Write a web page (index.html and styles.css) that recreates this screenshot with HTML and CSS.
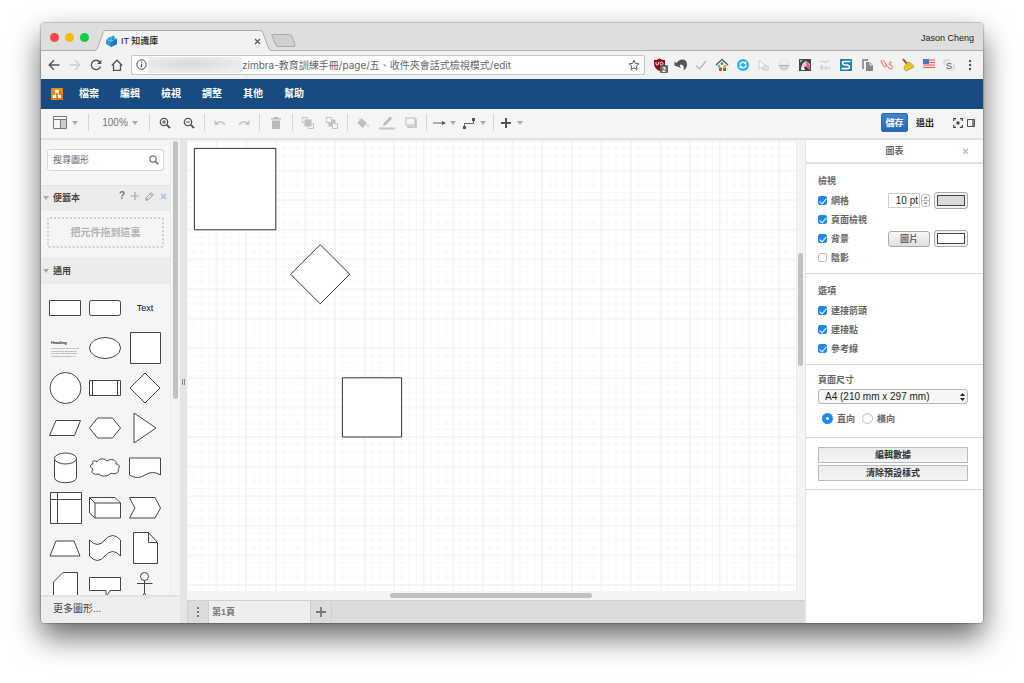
FILE: index.html
```html
<!DOCTYPE html>
<html lang="zh-Hant">
<head>
<meta charset="utf-8">
<title>IT 知識庫</title>
<link rel="stylesheet" href="styles.css">
</head>
<body>
<div class="window">
  <header class="tabstrip">
    <div class="lights"><i class="light red"></i><i class="light yellow"></i><i class="light green"></i></div>
    <div class="tab">
      <svg class="tab-edge" width="10" height="21" viewBox="0 0 10 21"><path d="M0 21C2 20 3 17 4 14L8 3Q9 .5 10 .5V21Z" fill="#f2f2f2"/><path d="M0 20.5C2 20 3 17 4 14L8 3Q9 .5 10 .5" fill="none" stroke="#aaa"/></svg>
      <div class="tab-body">
        <svg width="13" height="12" viewBox="0 0 13 12"><path d="M1 5 7 2l5 2v5l-6 3-5-3z" fill="#2d96d3"/><path d="M1 5 7 2l5 2-6 3z" fill="#5fb8e6"/><path d="M6 7l6-3v5l-6 3z" fill="#1878b8"/><ellipse cx="4.500" cy="3.500" rx="1.700" ry="1.200" fill="#2f9bd8"/><ellipse cx="8" cy="2" rx="1.700" ry="1.200" fill="#2f9bd8"/><ellipse cx="8" cy="4.300" rx="1.500" ry="1" fill="#2488c7"/></svg>
        <span class="tab-title">IT 知識庫</span>
        <button class="plain" aria-label="關閉分頁"><svg width="7" height="7" viewBox="0 0 7 7"><path d="M1 1l5 5M6 1 1 6" stroke="#555" stroke-width="1.200"/></svg></button>
      </div>
      <svg class="tab-edge" width="10" height="21" viewBox="0 0 10 21"><path d="M10 21C8 20 7 17 6 14L2 3Q1 .5 0 .5V21Z" fill="#f2f2f2"/><path d="M10 20.5C8 20 7 17 6 14L2 3Q1 .5 0 .5" fill="none" stroke="#aaa"/></svg>
    </div>
    <button class="plain newtab" aria-label="新分頁"><svg width="25" height="13" viewBox="0 0 25 13"><path d="M2 .5H18.500Q20 .5 21 2l3 8.500q.5 2-1 2H7q-1.500 0-2-1.500L1 2Q.5.5 2 .5Z" fill="#d0d0d0" stroke="#aaa"/></svg></button>
    <span class="profile">Jason Cheng</span>
  </header>

  <nav class="browserbar">
    <div class="nav-buttons">
      <button class="plain" aria-label="上一頁"><svg width="12" height="12" viewBox="0 0 12 12"><path d="M11.500 6H1.500M6 1.200 1.200 6 6 10.800" fill="none" stroke="#555" stroke-width="1.400"/></svg></button>
      <button class="plain" aria-label="下一頁"><svg width="12" height="12" viewBox="0 0 12 12"><path d="M.5 6h10M6 1.200 10.800 6 6 10.800" fill="none" stroke="#d0d0d0" stroke-width="1.400"/></svg></button>
      <button class="plain" aria-label="重新整理"><svg width="12" height="12" viewBox="0 0 12 12"><path d="M9.800 3A4.700 4.700 0 1 0 10.500 7.500" fill="none" stroke="#555" stroke-width="1.400"/><path d="M11.300.8V5H7z" fill="#555"/></svg></button>
      <button class="plain" aria-label="首頁"><svg width="12" height="12" viewBox="0 0 12 12"><path d="M.8 6.500 6 1.200l5.200 5.300M2.500 5.500v5.800h7V5.500" fill="none" stroke="#555" stroke-width="1.300"/></svg></button>
    </div>
    <div class="address">
      <svg width="11" height="11" viewBox="0 0 11 11"><circle cx="5.500" cy="5.500" r="4.700" fill="none" stroke="#444"/><path d="M5.500 4.700v3.500M5.500 2.500v1.200" stroke="#444" stroke-width="1.200"/></svg>
      <span class="redacted"></span>
      <input class="url" aria-label="網址" value="zimbra-教育訓練手冊/page/五、收件夾會話式檢視模式/edit">
      <svg width="12" height="12" viewBox="0 0 12 12"><path d="m6 1.200 1.400 3.300 3.600.3-2.700 2.400.8 3.500L6 8.800l-3.100 1.900.8-3.500L1 4.800l3.600-.3z" fill="none" stroke="#555"/></svg>
    </div>
    <div class="extensions">
      <svg viewBox="0 0 16 16"><path d="M2 3Q5 3 7.500 1.500 10 3 13 3v4q0 4-5.500 7Q2 11 2 7z" fill="#8c0a12"/><path d="M4 5v2q0 1 1.200 1t1.200-1V5M8 6.500a1.500 1.500 0 1 0 3 0 1.500 1.500 0 1 0-3 0" fill="none" stroke="#fff" stroke-width=".9"/><rect x="8" y="8" width="8" height="8" rx="1" fill="#666"/><text x="12" y="15" font-size="7" text-anchor="middle" class="badge">2</text></svg>
      <svg viewBox="0 0 16 16"><path d="M1.500 8.500V4.500L3.500 6Q6 2 10 2.500q4 .5 4 5 0 3.500-3.500 6 1-4-1-5.500-1.500-1-3 .5L8 11z" fill="#555"/></svg>
      <svg viewBox="0 0 16 16"><path d="m3 8.500 3.500 3.500L13 4" fill="none" stroke="#bbb" stroke-width="1.500"/></svg>
      <svg viewBox="0 0 16 16"><path d="M3 8v6h10V8L8 4z" fill="#fff"/><path d="M2 8 8 2.500 14 8" fill="none" stroke="#666" stroke-width="1.600"/><circle cx="8" cy="6.500" r="1.500" fill="#3aa84a"/><circle cx="5" cy="9" r="1.600" fill="#36c5e0"/><circle cx="11" cy="9" r="1.600" fill="#f3a712"/><rect x="5" y="10.500" width="3" height="3.500" fill="#e8402f"/><rect x="9" y="10.500" width="3" height="3.500" fill="#2f9c48"/></svg>
      <svg viewBox="0 0 16 16"><circle cx="8" cy="8" r="6" fill="#2bb5ee"/><path d="M5 8.500A3 3 0 0 1 10 6M11 7.500A3 3 0 0 1 6 10" fill="none" stroke="#fff" stroke-width="1.300"/><path d="M11.300 4v3H8.500zM4.700 12V9h2.800z" fill="#fff"/></svg>
      <svg viewBox="0 0 16 16"><path d="M4 3v9l2.500-2L8 13l1-4H11z" fill="#fafafa" stroke="#ccc"/><circle cx="11" cy="11" r="2.500" fill="#eee" stroke="#ccc"/><path d="m9.500 12.500 3-3" stroke="#ccc"/></svg>
      <svg viewBox="0 0 16 16"><circle cx="8" cy="8" r="5.500" fill="#d4d4d4"/><path d="M3 8a5 5 0 0 1 10 0z" fill="#efefef"/><path d="M3 8.500h10" stroke="#aaa"/></svg>
      <svg viewBox="0 0 16 16"><rect x="2" y="2" width="12" height="12" fill="#444"/><path d="M4 13C4 8 6 5 9 4l4 3v6l-4-4z" fill="#f3bccb"/><path d="M6 9 4 13h4z" fill="#fff"/><path d="M9 5q4 1 4 8l-3-4z" fill="#df4d82"/><path d="M3 6V3h3z" fill="#68c4a5"/></svg>
      <svg viewBox="0 0 16 16"><path d="M3 4h2M6 6V4l1 1 1-1v2M10 6V4h2M3 9h3M4 12h2v-2H4zM8 13v-3h2v2H8M12 9v3h1" fill="none" stroke="#ccc"/></svg>
      <svg viewBox="0 0 16 16"><rect x="2" y="2" width="12" height="12" fill="#267ead"/><path d="M12.500 4.500H6.500q-2 0-2 1.500T7 8h2.500q2 .3 2 2t-2 1.600H3.500" fill="none" stroke="#fff" stroke-width="1.600"/></svg>
      <svg viewBox="0 0 16 16"><path d="M3 2h6v2H5v8H3z" fill="#999"/><path d="M7 5h4l3 3v6H7z" fill="#888"/><path d="M11 5v3h3" fill="none" stroke="#eee"/></svg>
      <svg viewBox="0 0 16 16"><path d="M2 3c1 4 2 6 4 7 2 0 1-3 0-4l4 5c2 2 4 0 3-2l-3-2 1-2 2 1M4 3l3 4" fill="none" stroke="#f08479" stroke-width="1.100"/></svg>
      <svg viewBox="0 0 16 16"><path d="m3 2 4 5" stroke="#a8481b" stroke-width="2"/><path d="M8 5 4 10q0 3 2 4l8-4q-2-4-6-5z" fill="#f1cf2d" stroke="#b3901b" stroke-width=".8"/><path d="m6 8 4 4M8 7l4 3" stroke="#c49d1a" stroke-width=".8"/></svg>
      <svg viewBox="0 0 16 16"><rect x="2" y="2" width="12" height="9" fill="#f7dede"/><path d="M2 3h12M2 5.500h12M2 8h12M2 10.500h12" stroke="#e86161" stroke-width="1.200"/><rect x="2" y="2" width="6" height="5" fill="#4c78bd"/></svg>
      <svg viewBox="0 0 16 16"><circle cx="6" cy="6" r="4" fill="#ddd"/><circle cx="10" cy="10" r="4" fill="#ddd"/><rect x="4" y="4" width="8" height="9" rx="3" fill="#eee"/><text x="8" y="12" font-size="9" text-anchor="middle" class="letter">S</text></svg>
      <svg viewBox="0 0 16 16"><g fill="#555"><circle cx="8" cy="4" r="1.200"/><circle cx="8" cy="8" r="1.200"/><circle cx="8" cy="12" r="1.200"/></g></svg>
    </div>
  </nav>

  <nav class="menubar">
    <svg width="12" height="12" viewBox="0 0 12 12"><rect width="12" height="12" rx="1" fill="#f08705"/><path d="M7 12 2 7l5-5 5 5v5z" fill="#df6c0c"/><path d="M6 3 3.500 8M6 3l2.500 5" stroke="#fff"/><g fill="#fff"><rect x="4.200" y="1.800" width="3.600" height="3" rx=".4"/><rect x="1.800" y="7" width="3.400" height="3" rx=".4"/><rect x="6.800" y="7" width="3.400" height="3" rx=".4"/></g></svg>
    <a href="#">檔案</a><a href="#">編輯</a><a href="#">檢視</a><a href="#">調整</a><a href="#">其他</a><a href="#">幫助</a>
  </nav>

  <div class="toolbar">
    <button class="tool wide" aria-label="版面"><svg width="14" height="13" viewBox="0 0 14 13"><rect x="8" y="4" width="5" height="8" fill="#ccc"/><path d="M.5.5h13v12H.5zM.5 3.500h13M7.500 3.500v9" fill="none" stroke="#777"/></svg><i class="caret"></i></button>
    <i class="sep"></i>
    <button class="tool zoom">100%<i class="caret"></i></button>
    <i class="sep"></i>
    <button class="tool" aria-label="放大"><svg width="12" height="12" viewBox="0 0 12 12"><circle cx="5" cy="5" r="3.700" fill="none" stroke="#555" stroke-width="1.300"/><path d="m7.800 7.800 3.200 3.200" stroke="#555" stroke-width="1.800"/><path d="M3 5h4M5 3v4" stroke="#555"/></svg></button>
    <button class="tool" aria-label="縮小"><svg width="12" height="12" viewBox="0 0 12 12"><circle cx="5" cy="5" r="3.700" fill="none" stroke="#555" stroke-width="1.300"/><path d="m7.800 7.800 3.200 3.200" stroke="#555" stroke-width="1.800"/><path d="M3 5h4" stroke="#555"/></svg></button>
    <i class="sep"></i>
    <button class="tool" aria-label="復原"><svg width="12" height="8" viewBox="0 0 12 8"><path d="M.5 1v5h5L3.700 4.300Q7.500 1.800 10.500 6.500l1-.5Q8.500-.2 2.700 3.200z" fill="#c4c4c4"/></svg></button>
    <button class="tool" aria-label="重做"><svg width="12" height="8" viewBox="0 0 12 8"><path d="M11.500 1v5h-5l1.800-1.700Q4.500 1.800 1.500 6.500L.5 6Q3.500-.2 9.300 3.200z" fill="#c4c4c4"/></svg></button>
    <i class="sep"></i>
    <button class="tool trash" aria-label="刪除"><svg width="10" height="12" viewBox="0 0 10 12"><path d="M0 1h3V0h4v1h3v1.500H0zM1 3.500h8V12H1z" fill="#bbb"/></svg></button>
    <i class="sep"></i>
    <button class="tool" aria-label="移至最前"><svg width="12" height="12" viewBox="0 0 12 12"><path d="M.5.5h5v5h-5zM6.500 6.500h5v5h-5z" fill="none" stroke="#c4c4c4"/><rect x="2.500" y="2.500" width="7" height="7" fill="#c0c0c0"/></svg></button>
    <button class="tool" aria-label="移至最後"><svg width="12" height="12" viewBox="0 0 12 12"><rect x="2.500" y="2.500" width="7" height="7" fill="#c0c0c0"/><path d="M.5.5h5v5h-5zM6.500 6.500h5v5h-5z" fill="#f5f5f5" stroke="#c4c4c4"/></svg></button>
    <i class="sep"></i>
    <button class="tool" aria-label="填滿顏色"><svg width="14" height="12" viewBox="0 0 14 12"><path d="m6 1.500 5 5-4.500 4.500L1.500 6z" fill="#c0c0c0"/><path d="M2.500 1 8 6M6 1.500 2 5.500" stroke="#c0c0c0"/><path d="M12 7q2 3 0 3t0-3z" fill="#d0d0d0"/></svg></button>
    <button class="tool" aria-label="線條顏色"><svg width="16" height="14" viewBox="0 0 16 14"><path d="m4 10 .7-3 6.500-6.500 2 2L6.800 9z" fill="#bbb"/><rect x="0" y="11.500" width="16" height="2" fill="#c4c4c4"/></svg></button>
    <button class="tool" aria-label="陰影"><svg width="12" height="11" viewBox="0 0 12 11"><path d="M11 2v8H2" fill="none" stroke="#ccc" stroke-width="2"/><rect x="1" y="1" width="9" height="7" fill="#f5f5f5" stroke="#bbb"/></svg></button>
    <i class="sep"></i>
    <button class="tool wide2" aria-label="連接"><svg width="13" height="12" viewBox="0 0 13 12"><path d="M0 6h11" stroke="#666"/><path d="M9 4l4 2-4 2z" fill="#555"/></svg><i class="caret"></i></button>
    <button class="tool wide2" aria-label="航點"><svg width="13" height="12" viewBox="0 0 13 12"><path d="M1.500 9.500V6.500h9v-4" fill="none" stroke="#666"/><rect y="9" width="3" height="3" fill="#555"/><rect x="9" y="1" width="3" height="3" fill="#555"/></svg><i class="caret"></i></button>
    <i class="sep"></i>
    <button class="tool wide2" aria-label="插入"><svg width="13" height="12" viewBox="0 0 13 12"><path d="M1 6h10M6 1v10" stroke="#555" stroke-width="2"/></svg><i class="caret"></i></button>
    <div class="actions">
      <button class="save">儲存</button>
      <button class="plain exit">退出</button>
      <button class="plain" aria-label="全螢幕"><svg width="10" height="10" viewBox="0 0 10 10"><path d="M.7 3V.7H3M7 .7h2.300V3M9.300 7v2.300H7M3 9.300H.7V7" fill="none" stroke="#444" stroke-width="1.200"/><rect x="3.500" y="3.500" width="3" height="3" fill="#444"/></svg></button>
      <button class="plain" aria-label="格式面板"><svg width="8" height="8" viewBox="0 0 8 8"><path d="M.5.5h7v7h-7z" fill="none" stroke="#555"/><rect x="5" y="1" width="2" height="6" fill="#888"/></svg></button>
    </div>
  </div>

  <main class="workspace">
    <aside class="sidebar">
      <div class="palette-area">
        <div class="palettes">
          <div class="search"><input aria-label="搜尋圖形" placeholder="搜尋圖形"><svg width="10" height="10" viewBox="0 0 10 10"><circle cx="4" cy="4" r="3.200" fill="none" stroke="#777" stroke-width="1.200"/><path d="m6.300 6.300 3 3" stroke="#777" stroke-width="1.800"/></svg></div>
          <h2 class="section-head"><i class="caret"></i>便籤本
            <span class="head-tools">
              <button class="plain help">?</button>
              <button class="plain" aria-label="新增"><svg width="8" height="8" viewBox="0 0 8 8"><path d="M0 4h8M4 0v8" stroke="#aaa" stroke-width="1.200"/></svg></button>
              <button class="plain" aria-label="編輯"><svg width="9" height="9" viewBox="0 0 9 9"><path d="m.7 8.300.6-2.600 5-5 2 2-5 5zM5.200 1.800l2 2M1.500 5.800l1.700 1.700" fill="none" stroke="#999"/></svg></button>
              <button class="plain" aria-label="關閉"><svg width="7" height="7" viewBox="0 0 7 7"><path d="m1 1 5 5M6 1 1 6" stroke="#a5c3e0" stroke-width="1.500"/></svg></button>
            </span>
          </h2>
          <div class="dropzone">把元件拖到這裏</div>
          <h2 class="section-head"><i class="caret"></i>通用</h2>
          <div class="shapes">
            <svg viewBox="0 0 40 40"><path d="M4.500 12.500h31v15h-31z"/></svg>
            <svg viewBox="0 0 40 40"><rect x="4.500" y="12.500" width="31" height="15" rx="2"/></svg>
            <span class="shape-text">Text</span>
            <svg viewBox="0 0 40 40"><text x="6" y="15.500" font-size="4" class="mini-title">Heading</text><g class="mini"><text x="6" y="21" font-size="2.500">Lorem ipsum dolor sit am</text><text x="6" y="23.500" font-size="2.500">consectetur adipisicing</text><text x="6" y="26" font-size="2.500">sed do eiusmod tempor</text><text x="6" y="28.500" font-size="2.500">incididunt ut labore et</text></g></svg>
            <svg viewBox="0 0 40 40"><ellipse cx="20" cy="20" rx="15.500" ry="10.500"/></svg>
            <svg viewBox="0 0 40 40"><path d="M5.500 4.500h30v31h-30z"/></svg>
            <svg viewBox="0 0 40 40"><circle cx="20.500" cy="20" r="15.500"/></svg>
            <svg viewBox="0 0 40 40"><path d="M4.500 12.500h31v15h-31zM7.500 12.500v15M32.500 12.500v15"/></svg>
            <svg viewBox="0 0 40 40"><path d="m20 5 15 15-15 15L5 20z"/></svg>
            <svg viewBox="0 0 40 40"><path d="M11 12.500h24.500l-6 15H4.500z"/></svg>
            <svg viewBox="0 0 40 40"><path d="M12.500 10h15L35.500 20l-8 10h-15L4.500 20z"/></svg>
            <svg viewBox="0 0 40 40"><path d="m9 5 22 15L9 35z"/></svg>
            <svg viewBox="0 0 40 40"><path d="M9.500 10.500v19c0 7 22 7 22 0v-19"/><ellipse cx="20.500" cy="10.500" rx="11" ry="5.500"/></svg>
            <svg viewBox="0 0 40 40"><path d="M12 14c2-4 8-4 10-1 4-3 10-1 9 3 4 0 4 4 2 5 2 4-4 6-7 4-3 4-10 4-12 1-5 1-9-1-6-5-4-2-3-5 0-5-1-4 1-4 4-2z"/></svg>
            <svg viewBox="0 0 40 40"><path d="M4.500 10h31v17q-8-5-15.500 0t-15.500 0z"/></svg>
            <svg viewBox="0 0 40 40"><path d="M5.500 4.500h31v31h-31zM5.500 11.500h31M12.500 4.500v31"/></svg>
            <svg viewBox="0 0 40 40"><path d="M4.500 9.500H30l5.500 5.500v15H10l-5.500-5zM4.500 9.500 10 15h25.500M10 15v15"/></svg>
            <svg viewBox="0 0 40 40"><path d="M4.500 9.500H30l5.500 10.500L30 30H4.500L10 20z"/></svg>
            <svg viewBox="0 0 40 40"><path d="M11 13h18l6 15H5z"/></svg>
            <svg viewBox="0 0 40 40"><path d="M4.500 12q8 9 15.500 0t15.500 0v16q-8-9-15.500 0t-15.500 0z"/></svg>
            <svg viewBox="0 0 40 40"><path d="M8.500 4.500h15l9 10v21h-24zM23.500 4.500v10h9"/></svg>
            <svg viewBox="0 0 40 40"><path d="M18 4.500h14.500v31h-24V14z"/></svg>
            <svg viewBox="0 0 40 40"><path d="M4.500 9.500h31v13H25l-4 7v-7H4.500z"/></svg>
            <svg viewBox="0 0 40 40"><circle cx="19.500" cy="8.500" r="4"/><path d="M19.500 12.500V25M12 15.500h15.500M19.500 25l-6 9M19.500 25l6 9"/></svg>
          </div>
        </div>
        <div class="vtrack"><i class="thumb side-thumb"></i></div>
      </div>
      <a class="more" href="#">更多圖形...</a>
    </aside>
    <div class="splitter"><i></i></div>

    <section class="editor">
      <div class="canvas-row">
        <svg class="canvas" aria-label="繪圖區">
          <defs><pattern id="grid" width="40" height="40" patternUnits="userSpaceOnUse" patternTransform="translate(0 1) scale(.74)"><path d="M10 0v40M20 0v40M30 0v40M0 10h40M0 20h40M0 30h40" stroke="#f8f8f8" stroke-width="1.300"/><path d="M0 0h40M0 0v40M40 0v40M0 40h40" fill="none" stroke="#eee" stroke-width="1.500"/></pattern></defs>
          <rect width="100%" height="100%" fill="url(#grid)"/>
          <g transform="translate(0 1) scale(.74)" fill="#fff" stroke="#333" stroke-width="1.350"><path d="M10 10h110v110H10z"/><path d="m180 140 40 40-40 40-40-40z"/><path d="M210 320h80v80h-80z"/></g>
        </svg>
        <div class="vtrack"><i class="thumb canvas-thumb"></i></div>
      </div>
      <div class="htrack"><i class="hthumb"></i></div>
      <div class="pages">
        <button class="page-btn" aria-label="頁面選單"><svg width="3" height="11" viewBox="0 0 3 11"><path d="M0 0h2v2H0zM0 4h2v2H0zM0 8h2v2H0z" fill="#777"/></svg></button>
        <button class="page-tab">第1頁</button>
        <button class="page-btn" aria-label="新增頁面"><svg width="10" height="10" viewBox="0 0 10 10"><path d="M0 5h10M5 0v10" stroke="#777" stroke-width="1.800"/></svg></button>
      </div>
    </section>

    <aside class="format">
      <h2 class="format-title">圖表<button class="plain close" aria-label="關閉"><svg width="7" height="7" viewBox="0 0 7 7"><path d="m1 1 5 5M6 1 1 6" stroke="#a5c3e0" stroke-width="1.300"/></svg></button></h2>
      <section class="panel">
        <h3>檢視</h3>
        <div class="row"><label><input type="checkbox" checked>網格</label><span class="controls"><span class="spin"><input class="number" aria-label="網格大小" value="10 pt"><svg width="9" height="13" viewBox="0 0 9 13"><rect x=".5" y=".5" width="8" height="12" rx="2" fill="#fafafa" stroke="#bbb"/><path d="M.5 6.500h8" stroke="#bbb"/><path d="m2.500 4.500 2-2 2 2zM2.500 8.500l2 2 2-2z" fill="#777"/></svg></span><button class="swatch" aria-label="網格顏色"><i class="gray"></i></button></span></div>
        <div class="row"><label><input type="checkbox" checked>頁面檢視</label></div>
        <div class="row"><label><input type="checkbox" checked>背景</label><span class="controls"><button class="image-btn">圖片</button><button class="swatch" aria-label="背景顏色"><i></i></button></span></div>
        <div class="row"><label><input type="checkbox">陰影</label></div>
      </section>
      <section class="panel">
        <h3>選項</h3>
        <div class="row"><label><input type="checkbox" checked>連接箭頭</label></div>
        <div class="row"><label><input type="checkbox" checked>連接點</label></div>
        <div class="row"><label><input type="checkbox" checked>參考線</label></div>
      </section>
      <section class="panel paper">
        <h3><label for="paper">頁面尺寸</label></h3>
        <div class="select"><select id="paper"><option>A4 (210 mm x 297 mm)</option></select><svg width="5" height="8" viewBox="0 0 5 8"><path d="m0 3 2.500-3L5 3zM0 5l2.500 3L5 5z" fill="#222"/></svg></div>
        <div class="radios"><label><input type="radio" name="orientation" checked>直向</label><label><input type="radio" name="orientation">橫向</label></div>
      </section>
      <section class="panel buttons">
        <button>編輯數據</button>
        <button>清除預設樣式</button>
      </section>
    </aside>
  </main>
</div>
</body>
</html>
```
FILE: styles.css
```css
* { box-sizing: border-box; }
body {
  margin: 0;
  min-height: 100vh;
  display: flex;
  padding: 23px 41px 60px;
  background: #fff;
  font: 9px/12px "Liberation Sans", "Noto Sans CJK TC", sans-serif;
  color: #444;
}
button, input, select { font: inherit; color: inherit; margin: 0; padding: 0; }
svg { display: block; flex: none; }
h2, h3 { margin: 0; font-size: 9px; line-height: 12px; }
a { color: inherit; text-decoration: none; }
.plain { border: 0; background: none; display: block; }

.window {
  flex: 1;
  min-width: 0;
  height: calc(100vh - 83px);
  display: flex;
  flex-direction: column;
  border-radius: 4px;
  overflow: hidden;
  background: #f5f5f5;
  box-shadow: 0 0 1px 1px rgba(0, 0, 0, .2), 0 14px 30px rgba(0, 0, 0, .6);
}

/* Browser chrome */
.tabstrip {
  flex: none;
  height: 28px;
  display: flex;
  align-items: flex-end;
  background: #dedede;
  border-bottom: 1px solid #b0b0b0;
}
.lights { display: flex; gap: 6px; align-self: center; padding: 2px 6px 0 9px; }
.light { width: 9px; height: 9px; border-radius: 50%; }
.red { background: #fc4848; }
.yellow { background: #fdb90b; }
.green { background: #0fcf43; }
.tab { display: flex; margin-bottom: -1px; }
.tab-body {
  width: 156px;
  height: 21px;
  display: flex;
  align-items: center;
  background: #f2f2f2;
  border-top: 1px solid #aaa;
}
.tab-title { flex: 1; padding-left: 3px; color: #222; font-weight: 500; }
.newtab { margin: 0 0 3px; }
.profile { margin: 0 9px 6px auto; color: #222; }
.browserbar {
  flex: none;
  height: 28px;
  display: flex;
  align-items: center;
  padding: 0 5px 1px 7px;
  background: #f2f2f2;
}
.nav-buttons { display: flex; gap: 9px; padding-right: 8px; }
.address {
  flex: 1;
  min-width: 0;
  height: 20px;
  display: flex;
  align-items: center;
  padding: 0 4px;
  border: 1px solid #c4c4c4;
  border-radius: 2px;
  background: #fff;
}
.redacted {
  width: 94px;
  height: 16px;
  margin-left: 1px;
  background: radial-gradient(ellipse at 45% 45%, #d8d8d8, #eee 75%);
}
.url {
  flex: 1;
  min-width: 0;
  border: 0;
  background: none;
  font: 10px/14px Inter, "Noto Sans CJK TC", sans-serif;
  color: #666;
}
.extensions { flex: 0 0 326px; display: flex; justify-content: space-between; margin-left: 7px; }
.extensions svg { width: 16px; height: 16px; }
.badge { fill: #fff; font-weight: bold; }
.letter { fill: #555; }

/* Application menu and toolbar */
.menubar {
  flex: none;
  height: 30px;
  display: flex;
  align-items: center;
  gap: 21px;
  padding-left: 10px;
  background: #184b82;
  color: #fff;
  font-size: 10px;
  font-weight: bold;
}
.menubar svg { margin-right: -5px; }
.toolbar {
  flex: none;
  height: 31px;
  display: flex;
  align-items: center;
  padding: 0 8px 2px;
  background: #f5f5f5;
  border-bottom: 2px solid #e2e2e2;
}
.tool {
  width: 24px;
  height: 20px;
  display: flex;
  align-items: center;
  justify-content: center;
  border: 0;
  background: none;
}
.wide { width: 36px; gap: 5px; justify-content: flex-start; padding-left: 4px; }
.wide2 { width: 30px; gap: 4px; justify-content: flex-start; padding-left: 3px; }
.zoom { width: 54px; gap: 4px; padding-left: 2px; font-size: 10px; color: #777; }
.trash { width: 26px; }
.sep { flex: none; width: 1px; height: 17px; margin: 0 3px; background: #d6d6d6; }
.caret { flex: none; border: 3px solid transparent; border-top: 4px solid #aaa; border-bottom: 0; }
.actions { margin-left: auto; display: flex; align-items: center; gap: 4px; }
.save {
  width: 27px;
  height: 19px;
  border: 1px solid #2a6cb0;
  border-radius: 2px;
  background: linear-gradient(#3d85d2, #2767ae);
  color: #fff;
  font-weight: bold;
}
.exit { margin: 0 15px 0 4px; color: #222; font-weight: bold; }

/* Left palette */
.workspace { flex: 1; min-height: 0; display: flex; }
.sidebar { flex: 0 0 139px; min-width: 0; display: flex; flex-direction: column; background: #f5f5f5; }
.palette-area { flex: 1; min-height: 0; display: flex; }
.palettes { flex: 1; min-width: 0; overflow: hidden; }
.vtrack { flex: 0 0 9px; padding: 1px 2px; background: #f4f4f4; border-left: 1px solid #eaeaea; }
.thumb { display: block; width: 5px; border-radius: 3px; background: #c1c1c1; }
.side-thumb { height: 57%; }
.search {
  display: flex;
  align-items: center;
  height: 22px;
  margin: 9px 6px 14px;
  padding: 0 4px 0 5px;
  background: #fff;
  border: 1px solid #d8d8d8;
  border-radius: 3px;
}
.search input { flex: 1; width: 0; min-width: 0; border: 0; outline: 0; background: none; }
.search input::placeholder { color: #666; opacity: 1; }
.section-head {
  display: flex;
  align-items: center;
  height: 26px;
  padding: 0 3px 2px 2px;
  gap: 4px;
  background: #ececec;
  border-top: 1px solid #e5e5e5;
}
.head-tools { margin-left: auto; display: flex; align-items: center; gap: 6px; padding-bottom: 3px; }
.help { font-size: 10px; font-weight: bold; color: #777; }
.dropzone {
  display: flex;
  align-items: center;
  justify-content: center;
  height: 31px;
  margin: 6px 6px 10px;
  border: 2px dotted #d0d0d0;
  border-radius: 3px;
  font-size: 10px;
  font-weight: bold;
  color: #b3b3b3;
}
.shapes { display: grid; grid-template-columns: repeat(3, 40px); padding: 4px; }
.shapes svg { width: 40px; height: 40px; fill: #fff; stroke: #444; stroke-width: 1px; }
.shapes text { stroke: none; fill: #222; }
.mini-title { font-weight: bold; }
.mini text { fill: #667; }
.shape-text { align-self: center; text-align: center; color: #111; }
.more {
  flex: none;
  height: 28px;
  padding: 6px 12px;
  background: #eee;
  border-top: 2px solid #e2e2e2;
  font-size: 10px;
}
.splitter { flex: 0 0 7px; display: flex; align-items: center; justify-content: center; background: #e5e5e5; }
.splitter i { width: 3px; height: 6px; border: solid #888; border-width: 0 1px; }

/* Drawing area */
.editor { flex: 1; min-width: 0; display: flex; flex-direction: column; }
.canvas-row { flex: 1; min-height: 0; display: flex; }
.canvas { flex: 1; min-width: 0; height: 100%; background: #fff; }
.canvas-row .vtrack { display: flex; padding: 0 1px; align-items: flex-start; }
.canvas-thumb { height: 25%; margin-top: 113px; }
.htrack { flex: none; height: 9px; padding: 2px 9px 0 203px; background: #f4f4f4; }
.hthumb { display: block; width: 34%; min-width: 202px; height: 5px; border-radius: 3px; background: #c1c1c1; }
.pages { flex: none; height: 23px; display: flex; background: #dcdcdc; border-top: 1px solid #d0d0d0; }
.page-btn {
  width: 22px;
  display: flex;
  align-items: center;
  justify-content: center;
  border: 1px solid #cfcfcf;
  border-width: 0 1px;
  background: #dcdcdc;
}
.page-tab { width: 101px; padding-left: 3px; border: 0; background: #eee; text-align: left; font-weight: bold; color: #777; }

/* Format panel */
.format { flex: 0 0 178px; background: #fff; color: #666; border-left: 1px solid #e5e5e5; }
.format-title {
  height: 24px;
  display: grid;
  grid-template-columns: 1fr auto 1fr;
  align-items: center;
  border-bottom: 2px solid #e0e0e0;
}
.format-title::before { content: ""; }
.close { justify-self: end; margin-right: 14px; }
.panel { padding: 7px 15px 6px 12px; border-bottom: 1px solid #d8d8d8; font-weight: bold; }
.panel h3 { height: 20px; padding-top: 4px; }
.row { height: 19px; display: flex; align-items: center; justify-content: space-between; }
.row label, .radios label { display: flex; align-items: center; gap: 4px; }
input[type="checkbox"], input[type="radio"] {
  appearance: none;
  flex: none;
  width: 9px;
  height: 9px;
  display: flex;
  justify-content: center;
  border: 1px solid #bbb;
  border-radius: 2px;
  background: #fff;
}
input[type="checkbox"]:checked { background: #1f88f7; border-color: #1f88f7; }
input[type="checkbox"]:checked::after {
  content: "";
  width: 3px;
  height: 6px;
  border: solid #fff;
  border-width: 0 1px 1px 0;
  transform: rotate(40deg);
}
.controls { display: flex; align-items: center; gap: 4px; }
.spin { display: flex; align-items: center; gap: 1px; }
.number { width: 32px; height: 15px; border: 1px solid #ccc; text-align: right; padding-right: 1px; font-size: 10px; font-weight: normal; color: #222; }
.swatch {
  width: 34px;
  height: 17px;
  padding: 2px;
  border: 1px solid #aaa;
  border-radius: 3px;
  background: #f2f2f2;
}
.swatch i { display: block; height: 100%; border: 1px solid #444; background: #fff; }
.swatch .gray { background: #dadada; }
.image-btn { width: 42px; height: 16px; border: 1px solid #aaa; border-radius: 3px; background: linear-gradient(#f8f8f8, #dfdfdf); }
.paper { padding-top: 5px; padding-bottom: 9px; }
.paper h3 { height: 19px; }
.select { position: relative; }
.select select {
  appearance: none;
  display: block;
  width: 100%;
  height: 15px;
  padding-left: 6px;
  border: 1px solid #b5b5b5;
  border-radius: 3px;
  background: #f6f6f6;
  font-size: 10px;
  font-weight: normal;
  color: #222;
}
.select svg { position: absolute; right: 3px; top: 4px; }
.radios { display: flex; gap: 7px; height: 19px; margin-top: 5px; padding-left: 4px; }
.radios input[type="radio"] { width: 11px; height: 11px; border-radius: 50%; }
.radios input[type="radio"]:checked { border: 4px solid #1f88f7; }
.buttons { display: grid; gap: 2px; padding-top: 9px; padding-bottom: 8px; }
.buttons button {
  height: 16px;
  border: 1px solid #bbb;
  background: linear-gradient(#ebebeb, #f6f6f6);
  font-weight: bold;
  color: #333;
}
```
